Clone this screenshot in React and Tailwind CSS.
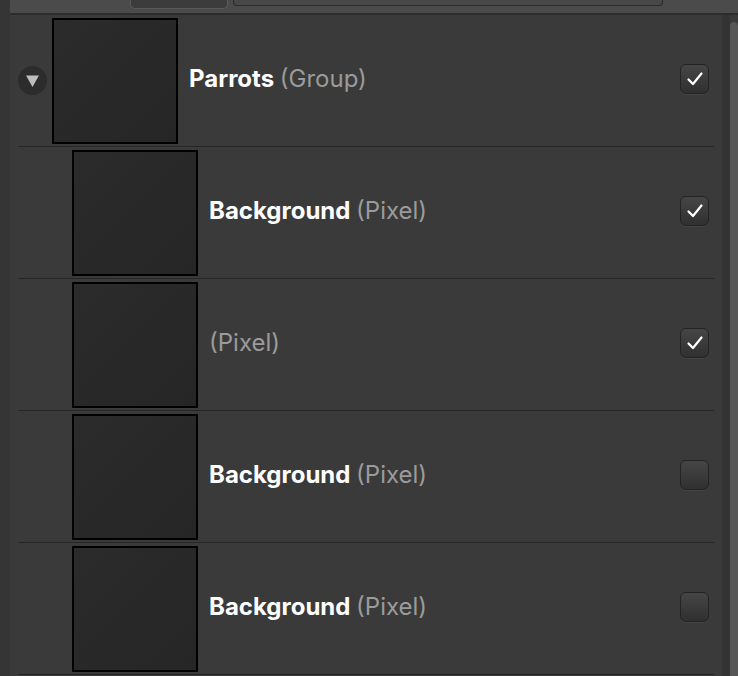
import React from "react";

const rows = [
  { name: "Background", kind: "(Pixel)", checked: true },
  { name: "", kind: "(Pixel)", checked: true },
  { name: "Background", kind: "(Pixel)", checked: false },
  { name: "Background", kind: "(Pixel)", checked: false },
];

const Checkbox = ({ checked }) => (
  <div className="w-[29px] h-[30px] rounded-[6px] border border-[#232323] bg-gradient-to-b from-[#464646] to-[#303030] shadow-[0_1px_0_#444] flex items-center justify-center">
    {checked && (
      <svg width="18" height="16" viewBox="0 0 18 16" fill="none">
        <path
          d="M2.5 8.5 L7 13 L15.5 2.5"
          stroke="#ffffff"
          strokeWidth="2.2"
          strokeLinecap="round"
          strokeLinejoin="round"
        />
      </svg>
    )}
  </div>
);

const Thumb = () => (
  <div className="w-[126px] h-[126px] shrink-0 border-2 border-black bg-gradient-to-br from-[#2b2b2b] to-[#262626]" />
);

const LayerRow = ({ name, kind, checked, indent }) => (
  <div className="h-[131px] flex items-center pr-[5px]">
    <div className={indent ? "w-[54px] shrink-0" : "w-[34px] shrink-0 flex items-center"}>
      {!indent && (
        <div className="w-[29px] h-[29px] rounded-full bg-[#2c2c2c] flex items-center justify-center">
          <svg width="15" height="14" viewBox="0 0 15 14">
            <path d="M1 1.5 H14 L7.5 13 Z" fill="#bdbdbd" />
          </svg>
        </div>
      )}
    </div>
    <Thumb />
    <div className="flex-1 pl-[11px] pb-[3px] text-[24px] leading-[30px] whitespace-nowrap">
      {name && <span className="font-bold text-white">{name} </span>}
      <span className="text-[#9b9b9b]">{kind}</span>
    </div>
    <div className="pb-[4px]">
      <Checkbox checked={checked} />
    </div>
  </div>
);

export default function App() {
  return (
    <div
      className="w-[738px] h-[676px] overflow-hidden flex bg-[#353535]"
      style={{ fontFamily: "Inter, 'Noto Sans', sans-serif" }}
    >
      <div className="w-[10px] shrink-0 bg-[#353535]" />
      <div className="flex-1 flex flex-col">
        {/* toolbar strip */}
        <div className="h-[13px] shrink-0 bg-[#4b4b4b] flex items-start">
          <div className="ml-[120px] w-[98px] h-[9px] rounded-b-[5px] bg-[#3c3c3c] border-b border-x border-[#5a5a5a]" />
          <div className="ml-[5px] w-[430px] h-[6px] rounded-b-[4px] border-b border-x border-[#2c2c2c] bg-[#484848]" />
        </div>
        <div className="h-[2px] shrink-0 bg-[#2c2c2c]" />
        <div className="flex-1 flex">
          <div className="flex-1 bg-[#3a3a3a] pl-[8px] pr-[8px]">
            <LayerRow name="Parrots" kind="(Group)" checked={true} />
            {rows.map((r, i) => (
              <div key={i}>
                <div className="h-[1px] bg-[#262626]" />
                <LayerRow {...r} indent />
              </div>
            ))}
            <div className="h-[1px] bg-[#262626]" />
          </div>
          <div className="w-[8px] bg-[#333333]" />
          <div className="w-[8px] bg-[#3a3a3a] pt-[7px]">
            <div className="h-full rounded-t-[4px] bg-[#575757]" />
          </div>
        </div>
      </div>
    </div>
  );
}
